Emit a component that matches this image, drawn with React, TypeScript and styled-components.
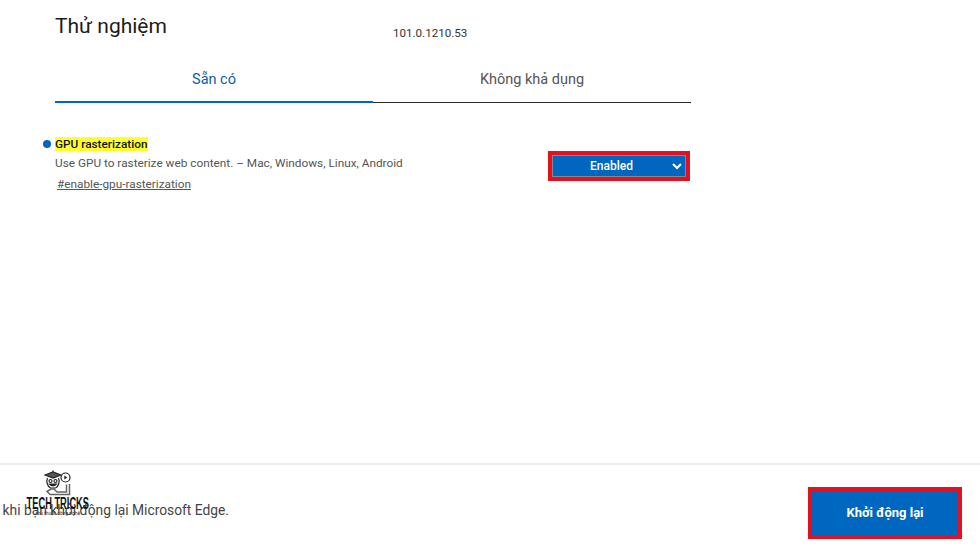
import React from "react";
import styled, { createGlobalStyle } from "styled-components";

const GlobalStyle = createGlobalStyle`
  html, body { margin: 0; padding: 0; background: #fff; }
  body { font-family: Roboto, "Liberation Sans", sans-serif; overflow: hidden; }
  * { box-sizing: border-box; }
`;

const Page = styled.div`
  width: 980px;
  height: 551px;
  display: flex;
  flex-direction: column;
  overflow: hidden;
`;

const Main = styled.main`
  flex: 1;
  padding: 14px 289px 0 55px;
`;

const Header = styled.header`
  display: flex;
  align-items: flex-start;
  height: 48px;
`;

const Title = styled.h1`
  margin: 0;
  width: 338px;
  font-size: 21px;
  line-height: 24px;
  font-weight: 400;
  color: #1b1b1b;
`;

const Version = styled.span`
  margin-top: 12px;
  font-size: 11.6px;
  line-height: 14px;
  color: #333;
`;

const Tabs = styled.div`
  display: flex;
  height: 41px;
  border-bottom: 1px solid #2b2b2b;
`;

const Tab = styled.div<{ $active?: boolean }>`
  flex: 1;
  text-align: center;
  padding-top: 9px;
  margin-bottom: -1px;
  font-size: 14.5px;
  line-height: 18px;
  color: ${(p) => (p.$active ? "#0f5ca8" : "#555")};
  border-bottom: ${(p) => (p.$active ? "2px solid #0067c0" : "none")};
  height: ${(p) => (p.$active ? "41px" : "40px")};
`;

const Flag = styled.section`
  display: flex;
  justify-content: space-between;
  margin-top: 34px;
`;

const FlagText = styled.div`
  position: relative;
  display: flex;
  flex-direction: column;
  align-items: flex-start;
`;

const Dot = styled.span`
  position: absolute;
  left: -12px;
  top: 3px;
  width: 8px;
  height: 8px;
  border-radius: 50%;
  background: #0067c0;
`;

const FlagName = styled.div`
  background: #ffff2e;
  color: #111;
  font-size: 11.8px;
  line-height: 14px;
  font-weight: 500;
`;

const FlagDesc = styled.p`
  margin: 5px 0 0;
  font-size: 11.8px;
  line-height: 14px;
  color: #555;
`;

const FlagLink = styled.a`
  margin: 7px 0 0 2px;
  font-size: 11.8px;
  line-height: 14px;
  color: #555;
  text-decoration: underline;
`;

const Highlight = styled.div`
  border: 4px solid #e5101f;
`;

const SelectBox = styled(Highlight)`
  margin: 14px 1px 0 0;
  width: 142px;
  height: 30px;
`;

const Select = styled.div`
  height: 22px;
  display: flex;
  align-items: center;
  background: #0067c0;
  border: 1px solid #808890;
  color: #fff;
  font-size: 12px;
  font-weight: 500;
  padding: 0 3px 0 37px;
  & > span { flex: 1; }
`;

const Footer = styled.footer`
  position: relative;
  height: 88px;
  display: flex;
  justify-content: space-between;
  border-top: 2px solid #ececec;
  padding: 22px 18px 0 0;
`;

const Notice = styled.div`
  width: 229px;
  height: 46px;
  display: flex;
  justify-content: flex-end;
  align-items: center;
  overflow: hidden;
  white-space: nowrap;
  font-size: 13.8px;
  color: #444;
`;

const RestartButton = styled(Highlight).attrs({ as: "button" })`
  width: 154px;
  height: 52px;
  background: #0067c0;
  color: #fff;
  font-family: inherit;
  font-size: 13px;
  font-weight: 700;
  padding: 0 0 2px;
`;

const Watermark = styled.div`
  position: absolute;
  left: 27px;
  top: 5px;
  width: 62px;
  display: flex;
  flex-direction: column;
  align-items: center;
`;

const WatermarkName = styled.span`
  margin-top: 0;
  font-family: "Liberation Sans", sans-serif;
  font-size: 16px;
  line-height: 15px;
  font-weight: 700;
  color: #111;
  white-space: nowrap;
  transform: scaleX(0.58);
`;

const WatermarkTag = styled.span`
  margin-top: -1px;
  font-size: 5px;
  line-height: 6px;
  color: #333;
  white-space: nowrap;
`;

const LogoIcon = () => (
  <svg width="28" height="26" viewBox="0 0 28 26" fill="none" stroke="#222" strokeWidth="1.2">
    <path d="M1 5 9 2l8 3-8 3z" fill="#555" />
    <path d="M9 0.500V2" />
    <path d="M3.500 8c-1.500 3 0 9 3 10h5c3-1 4.500-7 3-10" />
    <circle cx="6.500" cy="11" r="1.500" />
    <circle cx="11.500" cy="11" r="1.500" />
    <path d="M5.500 14c1.500 2.500 5.500 2.500 7 0z" fill="#222" />
    <circle cx="21.500" cy="7.500" r="4.500" />
    <path d="M20.300 5.500v4l3-2z" fill="#222" stroke="none" />
    <path d="M25.500 14v10.500H6l-3-3 4-2.500h3l3 3h9.500v-7.500" stroke="#666" strokeWidth="1.500" />
  </svg>
);

const Chevron = () => (
  <svg width="10" height="8" viewBox="0 0 10 8" fill="none" stroke="#fff" strokeWidth="2">
    <path d="M1 2l4 4 4-4" />
  </svg>
);

const App: React.FC = () => {
  return (
    <Page>
      <GlobalStyle />
      <Main>
        <Header>
          <Title>Thử nghiệm</Title>
          <Version>101.0.1210.53</Version>
        </Header>
        <Tabs>
          <Tab $active>Sẵn có</Tab>
          <Tab>Không khả dụng</Tab>
        </Tabs>
        <Flag>
          <FlagText>
            <Dot />
            <FlagName>GPU rasterization</FlagName>
            <FlagDesc>Use GPU to rasterize web content. – Mac, Windows, Linux, Android</FlagDesc>
            <FlagLink>#enable-gpu-rasterization</FlagLink>
          </FlagText>
          <SelectBox>
            <Select>
              <span>Enabled</span>
              <Chevron />
            </Select>
          </SelectBox>
        </Flag>
      </Main>
      <Footer>
        <Notice>Các thay đổi sẽ áp dụng sau khi bạn khởi động lại Microsoft Edge.</Notice>
        <RestartButton>Khởi động lại</RestartButton>
        <Watermark>
          <LogoIcon />
          <WatermarkName>TECH TRICKS</WatermarkName>
          <WatermarkTag>thủ thuật công nghệ</WatermarkTag>
        </Watermark>
      </Footer>
    </Page>
  );
};

export default App;
